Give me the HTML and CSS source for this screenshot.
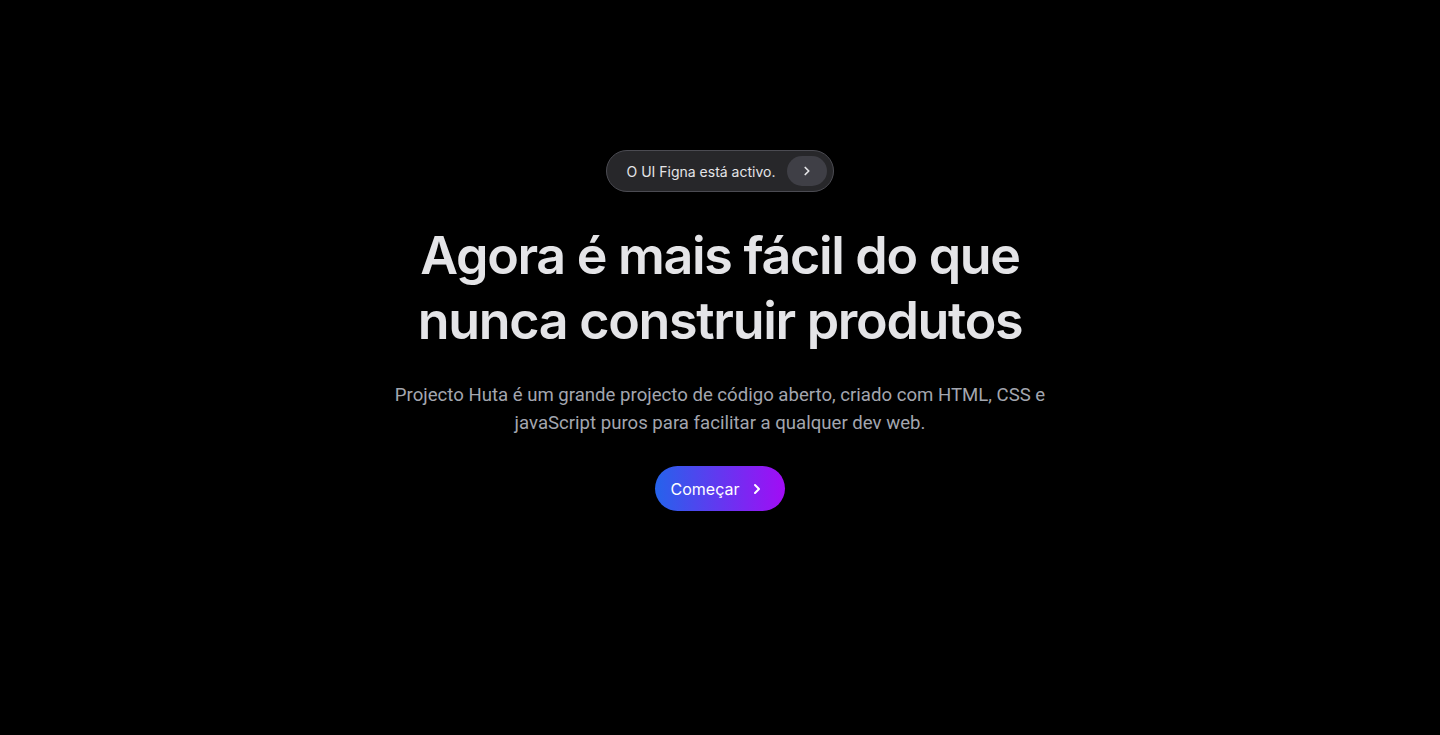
FILE: index.html
```html
<!DOCTYPE html>
<html lang="pt">
<head>
<meta charset="utf-8">
<title>Projecto Huta</title>
<link rel="stylesheet" href="styles.css">
</head>
<body>
<main class="hero">
  <a class="badge" href="#">
    <span class="badge-text">O UI Figna está activo.</span>
    <span class="badge-icon">
      <svg width="14" height="14" viewBox="0 0 24 24" fill="none" stroke="currentColor" stroke-width="3" stroke-linecap="round" stroke-linejoin="round"><path d="M9 6l6 6-6 6"/></svg>
    </span>
  </a>
  <h1 class="title">Agora é mais fácil do que<br>nunca construir produtos</h1>
  <p class="lead">Projecto Huta é um grande projecto de código aberto, criado com HTML, CSS e javaScript puros para facilitar a qualquer dev web.</p>
  <a class="cta" href="#">
    <span>Começar</span>
    <svg width="16" height="16" viewBox="0 0 24 24" fill="none" stroke="currentColor" stroke-width="3" stroke-linecap="round" stroke-linejoin="round"><path d="M9 6l6 6-6 6"/></svg>
  </a>
</main>
</body>
</html>
```

FILE: styles.css
```css
* { box-sizing: border-box; }
html, body { margin: 0; padding: 0; background: #000; }
body {
  font-family: Inter, "Noto Sans", sans-serif;
  color: #e4e4e7;
  min-height: 735px;
}
.hero {
  display: flex;
  flex-direction: column;
  align-items: center;
  text-align: center;
  padding-top: 150px;
}
.badge {
  display: flex;
  align-items: center;
  gap: 11px;
  height: 42px;
  padding: 0 6px 0 20px;
  border-radius: 999px;
  background: #27272a;
  border: 1px solid #4b4b52;
  color: #e4e4e7;
  text-decoration: none;
  font-size: 14px;
}
.badge-text {
  margin-right: 1px;
}
.badge-icon {
  display: flex;
  align-items: center;
  justify-content: center;
  width: 40px;
  height: 30px;
  border-radius: 999px;
  background: #3f3f46;
  color: #e4e4e7;
}
.title {
  margin: 31px 0 0;
  font-size: 52px;
  line-height: 65px;
  font-weight: 600;
  letter-spacing: -0.025em;
  color: #e4e4e7;
}
.lead {
  margin: 28px 0 0;
  max-width: 680px;
  font-family: Roboto, "Liberation Sans", sans-serif;
  font-size: 18.6px;
  line-height: 28px;
  color: #a3a6af;
}
.cta {
  margin-top: 29px;
  display: flex;
  align-items: center;
  gap: 10px;
  height: 45px;
  padding: 0 20px 0 16px;
  border-radius: 999px;
  background: linear-gradient(90deg, #2563eb, #a20cf5);
  color: #fff;
  text-decoration: none;
  font-size: 16px;
}
```
